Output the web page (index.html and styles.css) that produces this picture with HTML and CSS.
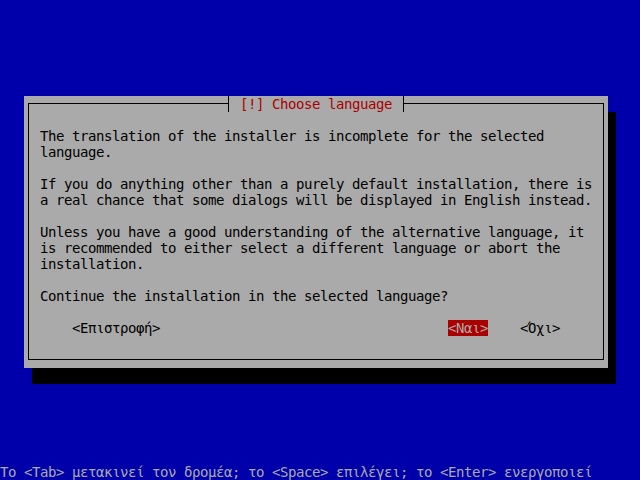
FILE: index.html
```html
<!DOCTYPE html>
<html lang="el">
<head>
  <meta charset="UTF-8">
  <title>Choose language</title>
  <link rel="stylesheet" href="styles.css">
</head>
<body>
  <div class="screen">
    <div class="dialog">
      <div class="title">[!] Choose language</div>
      <div class="frame">
        <p>The translation of the installer is incomplete for the selected<br>language.</p>
        <p>If you do anything other than a purely default installation, there is<br>a real chance that some dialogs will be displayed in English instead.</p>
        <p>Unless you have a good understanding of the alternative language, it<br>is recommended to either select a different language or abort the<br>installation.</p>
        <p>Continue the installation in the selected language?</p>
        <div class="buttons">
          <span class="btn btn-back">&lt;Επιστροφή&gt;</span>
          <span class="btn btn-yes">&lt;Ναι&gt;</span>
          <span class="btn btn-no">&lt;Όχι&gt;</span>
        </div>
      </div>
    </div>
    <div class="hint">Το &lt;Tab&gt; μετακινεί τον δρομέα; το &lt;Space&gt; επιλέγει; το &lt;Enter&gt; ενεργοποιεί</div>
  </div>
</body>
</html>
```

FILE: styles.css
```css
* {
  margin: 0;
  padding: 0;
  box-sizing: border-box;
}

body {
  background: #0000aa;
  font-family: 'DejaVu Sans Mono', 'Liberation Mono', monospace;
  font-size: 14px;
  letter-spacing: -0.428px;
  line-height: 16px;
  color: #000;
}

.screen {
  width: 640px;
  height: 480px;
  display: flex;
  flex-direction: column;
  overflow: hidden;
}

/* dialog window, 73 x 17 cells */
.dialog {
  position: relative;
  width: 584px;
  height: 272px;
  margin: 96px 0 0 24px;
  padding: 7px 4px 8px 4px;
  background: #aaaaaa;
  box-shadow: 8px 16px 0 #000;
}

.frame {
  height: 257px;
  border: 1px solid #000;
  padding: 24px 0 0 11px;
  white-space: nowrap;
}

.title {
  position: absolute;
  left: 204px;
  top: 0;
  width: 176px;
  height: 16px;
  padding-left: 11px;
  background: #aaaaaa;
  border-left: 1px solid #000;
  border-right: 1px solid #000;
  color: #aa0000;
}

.frame p {
  margin-bottom: 16px;
}

.buttons {
  display: flex;
}

.btn {
  height: 16px;
}

.btn-back {
  margin-left: 32px;
}

.btn-yes {
  margin-left: 288px;
  background: #aa0000;
  color: #aaaaaa;
}

.btn-no {
  margin-left: 32px;
}

.hint {
  margin-top: auto;
  color: #aaaaaa;
  white-space: nowrap;
}
```
